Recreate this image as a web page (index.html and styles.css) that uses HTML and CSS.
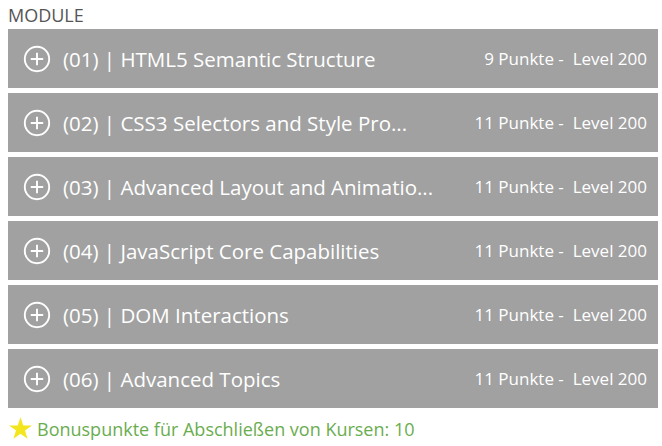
FILE: index.html
```html
<!DOCTYPE html>
<html>
<head>
<meta charset="utf-8">
<link rel="stylesheet" href="styles.css">
</head>
<body>
<div class="page">
  <div class="heading">MODULE</div>
  <div class="list">
    <div class="row">
      <svg class="plus" viewBox="0 0 28 28"><circle cx="14" cy="14" r="12.2"/><path d="M14 7.8V20.2M7.8 14H20.2"/></svg>
      <span class="title">(01) | HTML5 Semantic Structure</span>
      <span class="meta">9 Punkte -&nbsp; Level 200</span>
    </div>
    <div class="row">
      <svg class="plus" viewBox="0 0 28 28"><circle cx="14" cy="14" r="12.2"/><path d="M14 7.8V20.2M7.8 14H20.2"/></svg>
      <span class="title">(02) | CSS3 Selectors and Style Pro...</span>
      <span class="meta">11 Punkte -&nbsp; Level 200</span>
    </div>
    <div class="row">
      <svg class="plus" viewBox="0 0 28 28"><circle cx="14" cy="14" r="12.2"/><path d="M14 7.8V20.2M7.8 14H20.2"/></svg>
      <span class="title">(03) | Advanced Layout and Animatio...</span>
      <span class="meta">11 Punkte -&nbsp; Level 200</span>
    </div>
    <div class="row">
      <svg class="plus" viewBox="0 0 28 28"><circle cx="14" cy="14" r="12.2"/><path d="M14 7.8V20.2M7.8 14H20.2"/></svg>
      <span class="title">(04) | JavaScript Core Capabilities</span>
      <span class="meta">11 Punkte -&nbsp; Level 200</span>
    </div>
    <div class="row">
      <svg class="plus" viewBox="0 0 28 28"><circle cx="14" cy="14" r="12.2"/><path d="M14 7.8V20.2M7.8 14H20.2"/></svg>
      <span class="title">(05) | DOM Interactions</span>
      <span class="meta">11 Punkte -&nbsp; Level 200</span>
    </div>
    <div class="row">
      <svg class="plus" viewBox="0 0 28 28"><circle cx="14" cy="14" r="12.2"/><path d="M14 7.8V20.2M7.8 14H20.2"/></svg>
      <span class="title">(06) | Advanced Topics</span>
      <span class="meta">11 Punkte -&nbsp; Level 200</span>
    </div>
  </div>
  <div class="bonus">
    <svg class="star" viewBox="0 0 24 24"><path d="M12 1.2L14.7 9H23L16.3 13.9L18.8 21.9L12 17L5.2 21.9L7.7 13.9L1 9H9.3Z"/></svg>
    <span>Bonuspunkte für Abschließen von Kursen: 10</span>
  </div>
</div>
</body>
</html>
```
FILE: styles.css
```css
html, body {
  margin: 0;
  padding: 0;
  background: #ffffff;
}
.page {
  width: 650px;
  padding: 3px 0 0 8px;
  font-family: "Open Sans", "Noto Sans", sans-serif;
}
.heading {
  font-size: 18px;
  line-height: 24px;
  height: 26px;
  color: #555555;
}
.list {
  display: flex;
  flex-direction: column;
  gap: 5px;
}
.row {
  height: 59px;
  background: #a1a1a1;
  color: #ffffff;
  display: flex;
  align-items: center;
  padding: 0 11px 0 15px;
}
.plus {
  width: 28px;
  height: 28px;
  flex: none;
  fill: none;
  stroke: #ffffff;
  stroke-width: 1.9;
}
.title {
  margin-left: 12px;
  font-size: 20.5px;
  flex: 1;
  white-space: nowrap;
}
.meta {
  font-size: 17px;
  white-space: nowrap;
}
.bonus {
  display: flex;
  align-items: center;
  margin-top: 8px;
  color: #6aad4f;
  font-size: 18px;
}
.star {
  width: 25px;
  height: 25px;
  fill: #f4e61e;
  margin-right: 4px;
}
```
